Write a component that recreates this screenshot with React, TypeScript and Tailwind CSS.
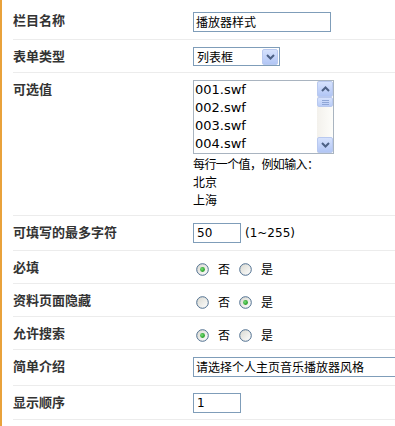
import React from "react";

const cjk = '"Noto Sans CJK SC", "Noto Sans", sans-serif';
const latin = '"DejaVu Sans", "Noto Sans CJK SC", sans-serif';

const Radio = ({ checked }: { checked?: boolean }) => (
  <svg width="13" height="13" viewBox="0 0 13 13" className="shrink-0">
    <defs>
      <linearGradient id="rfill" x1="0" y1="0" x2="1" y2="1">
        <stop offset="0" stopColor="#d8d8d0" />
        <stop offset="1" stopColor="#ffffff" />
      </linearGradient>
      <radialGradient id="rdot" cx="0.4" cy="0.4" r="0.6">
        <stop offset="0" stopColor="#7be07b" />
        <stop offset="1" stopColor="#1f9a1f" />
      </radialGradient>
    </defs>
    <circle cx="6.5" cy="6.5" r="5.8" fill="url(#rfill)" stroke="#4f6f8f" strokeWidth="1" />
    {checked && <circle cx="6.5" cy="6.5" r="2.4" fill="url(#rdot)" />}
  </svg>
);

const Arrow = ({ up }: { up?: boolean }) => (
  <svg width="9" height="6" viewBox="0 0 9 6">
    <path
      d={up ? "M1 5 L4.5 1.5 L8 5" : "M1 1 L4.5 4.5 L8 1"}
      fill="none"
      stroke="#4d6185"
      strokeWidth="2"
    />
  </svg>
);

const Label = ({ children }: { children: React.ReactNode }) => (
  <div
    className="w-[180px] shrink-0 pt-[9px] text-[13px] leading-[13px] font-bold text-[#333]"
    style={{ fontFamily: cjk }}
  >
    {children}
  </div>
);

const Row = ({ h, label, children }: { h: string; label: string; children: React.ReactNode }) => (
  <div className={`flex border-b border-[#ececec] ${h}`}>
    <Label>{label}</Label>
    <div className="min-w-0 flex-1 pt-[7px]">{children}</div>
  </div>
);

const YesNo = ({ yes }: { yes?: boolean }) => (
  <div className="flex h-[20px] items-center pl-[3px] text-[12px] text-black" style={{ fontFamily: cjk }}>
    <Radio checked={!yes} />
    <span className="ml-[9px]">否</span>
    <span className="ml-[9px]"><Radio checked={yes} /></span>
    <span className="ml-[9px]">是</span>
  </div>
);

export default function App() {
  return (
    <div className="h-[426px] w-[395px] overflow-hidden border-l-2 border-[#e9a23b] bg-white">
      <div className="ml-[11px] pt-[4px]">
        <Row h="h-[36px]" label="栏目名称">
          <div className="pt-[1px]">
            <div
              className="flex h-[20px] w-[138px] items-center border border-[#7f9db9] px-[2px] text-[12px] text-black"
              style={{ fontFamily: cjk }}
            >
              播放器样式
            </div>
          </div>
        </Row>
        <Row h="h-[33px]" label="表单类型">
          <div
            className="flex h-[19px] w-[87px] items-center border border-[#7f9db9] text-[12px] text-black"
            style={{ fontFamily: cjk }}
          >
            <span className="flex-1 pl-[3px]">列表框</span>
            <div className="mr-[1px] flex h-[16px] w-[16px] items-center justify-center rounded-[2px] border border-[#b9c9ef] bg-gradient-to-b from-[#d6e2fd] to-[#b2c6f5]">
              <Arrow />
            </div>
          </div>
        </Row>
        <Row h="h-[143px]" label="可选值">
          <div className="flex h-[74px] w-[141px] border border-[#a9b4c0] bg-white">
            <div className="flex-1 pl-[1px] text-[13px] leading-[18px] text-black" style={{ fontFamily: latin }}>
              <div>001.swf</div>
              <div>002.swf</div>
              <div>003.swf</div>
              <div>004.swf</div>
            </div>
            <div className="flex w-[16px] flex-col bg-gradient-to-r from-[#f3f1ec] to-[#fdfdfa]">
              <div className="flex h-[16px] items-center justify-center rounded-[2px] border border-[#b9c9ef] bg-gradient-to-b from-[#d6e2fd] to-[#b2c6f5]">
                <Arrow up />
              </div>
              <div className="flex h-[10px] flex-col items-center justify-center gap-[1px] rounded-[2px] border border-[#b9c9ef] bg-gradient-to-b from-[#d6e2fd] to-[#b9ccf7]">
                <div className="h-px w-[7px] bg-[#8fa6d6]" />
                <div className="h-px w-[7px] bg-[#8fa6d6]" />
                <div className="h-px w-[7px] bg-[#8fa6d6]" />
              </div>
              <div className="flex-1" />
              <div className="flex h-[16px] items-center justify-center rounded-[2px] border border-[#b9c9ef] bg-gradient-to-b from-[#d6e2fd] to-[#b2c6f5]">
                <Arrow />
              </div>
            </div>
          </div>
          <div className="pt-[1px] text-[12px] leading-[18px] text-black" style={{ fontFamily: cjk }}>
            <div className="tracking-[-0.6px]">每行一个值，例如输入：</div>
            <div>北京</div>
            <div>上海</div>
          </div>
        </Row>
        <Row h="h-[35px]" label="可填写的最多字符">
          <div className="flex items-center text-[12px] text-black" style={{ fontFamily: latin }}>
            <div className="flex h-[20px] w-[48px] items-center border border-[#7f9db9] px-[3px]">50</div>
            <span className="ml-[4px]">(1~255)</span>
          </div>
        </Row>
        <Row h="h-[33px]" label="必填">
          <div className="pt-[1px]">
            <YesNo />
          </div>
        </Row>
        <Row h="h-[33px]" label="资料页面隐藏">
          <div className="pt-[1px]">
            <YesNo yes />
          </div>
        </Row>
        <Row h="h-[33px]" label="允许搜索">
          <div className="pt-[1px]">
            <YesNo />
          </div>
        </Row>
        <Row h="h-[36px]" label="简单介绍">
          <div
            className="flex h-[20px] w-[240px] shrink-0 items-center whitespace-nowrap border border-[#7f9db9] px-[2px] text-[12px] text-black"
            style={{ fontFamily: cjk }}
          >
            请选择个人主页音乐播放器风格
          </div>
        </Row>
        <Row h="h-[34px]" label="显示顺序">
          <div
            className="flex h-[20px] w-[48px] items-center border border-[#7f9db9] px-[3px] text-[12px] text-black"
            style={{ fontFamily: latin }}
          >
            1
          </div>
        </Row>
      </div>
    </div>
  );
}
